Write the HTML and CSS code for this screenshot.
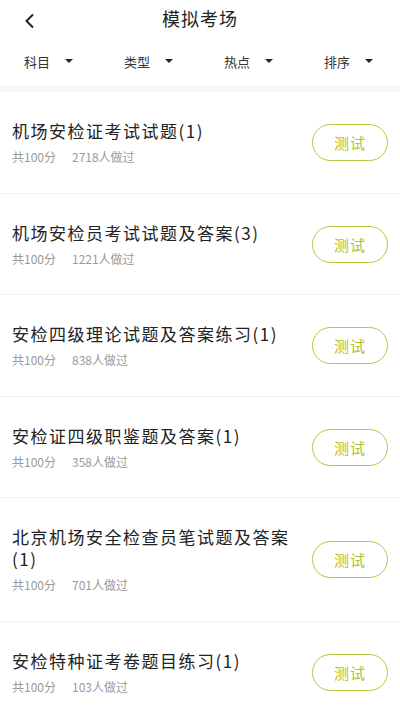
FILE: index.html
```html
<!DOCTYPE html>
<html lang="zh-CN">
<head>
<meta charset="UTF-8" />
<meta name="viewport" content="width=device-width, initial-scale=1" />
<title>模拟考场</title>
<link rel="stylesheet" href="styles.css">
</head>
<body>

<div class="header">
  <span class="back">
    <svg width="12" height="16" viewBox="0 0 12 16"><path d="M9 1.5 L2.5 8 L9 14.5" fill="none" stroke="#222" stroke-width="2"/></svg>
  </span>
  <div class="title">模拟考场</div>
</div>

<div class="filters">
  <div class="filter">科目 <i class="caret"></i></div>
  <div class="filter">类型 <i class="caret"></i></div>
  <div class="filter">热点 <i class="caret"></i></div>
  <div class="filter">排序 <i class="caret"></i></div>
</div>

<div class="list">
  <div class="item">
    <div class="info">
      <div class="name">机场安检证考试试题(1)</div>
      <div class="meta"><span>共100分</span><span>2718人做过</span></div>
    </div>
    <div class="btn">测试</div>
  </div>
  <div class="item">
    <div class="info">
      <div class="name">机场安检员考试试题及答案(3)</div>
      <div class="meta"><span>共100分</span><span>1221人做过</span></div>
    </div>
    <div class="btn">测试</div>
  </div>
  <div class="item">
    <div class="info">
      <div class="name">安检四级理论试题及答案练习(1)</div>
      <div class="meta"><span>共100分</span><span>838人做过</span></div>
    </div>
    <div class="btn">测试</div>
  </div>
  <div class="item">
    <div class="info">
      <div class="name">安检证四级职鉴题及答案(1)</div>
      <div class="meta"><span>共100分</span><span>358人做过</span></div>
    </div>
    <div class="btn">测试</div>
  </div>
  <div class="item">
    <div class="info">
      <div class="name">北京机场安全检查员笔试题及答案(1)</div>
      <div class="meta"><span>共100分</span><span>701人做过</span></div>
    </div>
    <div class="btn">测试</div>
  </div>
  <div class="item">
    <div class="info">
      <div class="name">安检特种证考卷题目练习(1)</div>
      <div class="meta"><span>共100分</span><span>103人做过</span></div>
    </div>
    <div class="btn">测试</div>
  </div>
</div>

</body>
</html>
```

FILE: styles.css
```css
body {
  margin: 0;
  font-family: "Noto Sans CJK SC", "Noto Sans", sans-serif;
  color: #222;
  background: #fff;
}

.header { height: 36px; display: flex; align-items: center; justify-content: center; position: relative; }
.back { position: absolute; left: 24px; top: 10px; }
.title { font-size: 18px; letter-spacing: 1px; }

.filters { display: flex; height: 50px; align-items: center; border-bottom: 6px solid #f6f6f6; }
.filter {
  width: 100px; box-sizing: border-box; padding-left: 24px;
  font-size: 13px; color: #333; display: flex; align-items: center;
}
.caret {
  margin-left: 15px; width: 0; height: 0;
  border-left: 4.5px solid transparent; border-right: 4.5px solid transparent;
  border-top: 4.5px solid #222;
}

.item {
  display: flex; align-items: center; justify-content: space-between;
  padding: 28px 12px 27.5px 12px; border-bottom: 1px solid #f2f2f2;
}
.info { flex: 1; padding-right: 14px; }
.name { font-size: 17px; line-height: 22px; letter-spacing: 1.5px; }
.meta { margin-top: 7px; font-size: 12px; line-height: 16px; color: #9a9a9a; display: flex; gap: 16px; }
.btn {
  width: 76px; height: 37px; box-sizing: border-box; flex-shrink: 0;
  border: 1px solid #b9c53d; border-radius: 19px;
  display: flex; align-items: center; justify-content: center;
  color: #b2c02c; font-size: 15px; letter-spacing: 1px;
}
```
